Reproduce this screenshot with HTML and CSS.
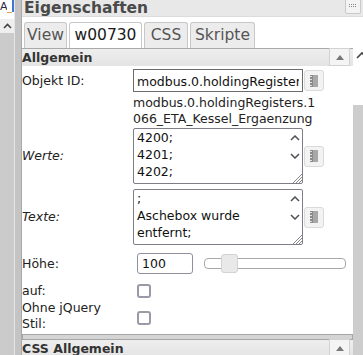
FILE: index.html
```html
<!DOCTYPE html>
<html lang="de">
<head>
<meta charset="utf-8">
<title>Eigenschaften</title>
<link rel="stylesheet" href="styles.css">
</head>
<body>
<div class="app">
  <aside class="side">
    <div class="side-top"><span class="side-a">A</span><span class="side-u">_</span><span class="side-mark"></span></div>
    <div class="side-arrow">
      <svg width="9" height="6" viewBox="0 0 9 6"><polyline points="1,5 4.5,1.5 8,5" fill="none" stroke="#444" stroke-width="1.6"/></svg>
    </div>
    <div class="side-thumb"></div>
  </aside>
  <div class="splitter"></div>
  <main class="panel">
    <header class="panel-head">
      <span class="panel-title">Eigenschaften</span>
      <span class="grip-btn">
        <svg width="8" height="4" viewBox="0 0 8 4"><g fill="#888"><rect x="0" y="0" width="1" height="1"/><rect x="2" y="0" width="1" height="1"/><rect x="4" y="0" width="1" height="1"/><rect x="6" y="0" width="1" height="1"/><rect x="0" y="2" width="1" height="1"/><rect x="2" y="2" width="1" height="1"/><rect x="4" y="2" width="1" height="1"/><rect x="6" y="2" width="1" height="1"/></g></svg>
      </span>
    </header>
    <nav class="tabs">
      <span class="tab tab-view">View</span>
      <span class="tab tab-active tab-w">w00730</span>
      <span class="tab tab-css">CSS</span>
      <span class="tab tab-skr">Skripte</span>
    </nav>
    <div class="body">
      <div class="content">
        <div class="sec-head">
          <span class="sec-title">Allgemein</span>
          <span class="sec-btn"><svg width="8" height="5" viewBox="0 0 8 5"><polygon points="0,5 4,0 8,5" fill="#777"/></svg></span>
        </div>

        <div class="row row-id">
          <label class="lbl">Objekt ID:</label>
          <div class="ctrl">
            <input class="txt txt-id" type="text" value="modbus.0.holdingRegisters.1066_ETA_Kessel_Ergaenzung">
            <span class="pick"><svg width="8" height="12" viewBox="0 0 8 12"><rect x="0" y="0" width="8" height="12" fill="#8a8a8a"/><rect x="3" y="0" width="5" height="12" fill="#a8a8a8"/><g fill="#e2e2e2"><rect x="0" y="1" width="2" height="1"/><rect x="0" y="4" width="2" height="1"/><rect x="0" y="7" width="2" height="1"/><rect x="0" y="10" width="2" height="1"/></g></svg></span>
          </div>
        </div>

        <div class="row row-path">
          <span class="lbl"></span>
          <div class="path">modbus.0.holdingRegisters.1<br>066_ETA_Kessel_Ergaenzung</div>
        </div>

        <div class="row row-ta row-werte">
          <label class="lbl lbl-it">Werte:</label>
          <div class="ctrl">
            <div class="ta">
              <div class="ta-text">4200;
4201;
4202;</div>
              <div class="ta-bar">
                <span class="ta-up"><svg width="10" height="6" viewBox="0 0 10 6"><polyline points="1,5 5,1 9,5" fill="none" stroke="#505050" stroke-width="1.5"/></svg></span>
                <span class="ta-down"><svg width="10" height="6" viewBox="0 0 10 6"><polyline points="1,1 5,5 9,1" fill="none" stroke="#505050" stroke-width="1.5"/></svg></span>
                <span class="ta-grip"><svg width="10" height="10" viewBox="0 0 10 10"><g stroke="#888" stroke-width="1"><line x1="10" y1="1" x2="1" y2="10"/><line x1="10" y1="4" x2="4" y2="10"/><line x1="10" y1="7" x2="7" y2="10"/></g></svg></span>
              </div>
            </div>
            <span class="pick"><svg width="8" height="12" viewBox="0 0 8 12"><rect x="0" y="0" width="8" height="12" fill="#8a8a8a"/><rect x="3" y="0" width="5" height="12" fill="#a8a8a8"/><g fill="#e2e2e2"><rect x="0" y="1" width="2" height="1"/><rect x="0" y="4" width="2" height="1"/><rect x="0" y="7" width="2" height="1"/><rect x="0" y="10" width="2" height="1"/></g></svg></span>
          </div>
        </div>

        <div class="row row-ta row-texte">
          <label class="lbl lbl-it">Texte:</label>
          <div class="ctrl">
            <div class="ta">
              <div class="ta-text">;
Aschebox wurde
entfernt;</div>
              <div class="ta-bar">
                <span class="ta-up"><svg width="10" height="6" viewBox="0 0 10 6"><polyline points="1,5 5,1 9,5" fill="none" stroke="#505050" stroke-width="1.5"/></svg></span>
                <span class="ta-down"><svg width="10" height="6" viewBox="0 0 10 6"><polyline points="1,1 5,5 9,1" fill="none" stroke="#505050" stroke-width="1.5"/></svg></span>
                <span class="ta-grip"><svg width="10" height="10" viewBox="0 0 10 10"><g stroke="#888" stroke-width="1"><line x1="10" y1="1" x2="1" y2="10"/><line x1="10" y1="4" x2="4" y2="10"/><line x1="10" y1="7" x2="7" y2="10"/></g></svg></span>
              </div>
            </div>
            <span class="pick"><svg width="8" height="12" viewBox="0 0 8 12"><rect x="0" y="0" width="8" height="12" fill="#8a8a8a"/><rect x="3" y="0" width="5" height="12" fill="#a8a8a8"/><g fill="#e2e2e2"><rect x="0" y="1" width="2" height="1"/><rect x="0" y="4" width="2" height="1"/><rect x="0" y="7" width="2" height="1"/><rect x="0" y="10" width="2" height="1"/></g></svg></span>
          </div>
        </div>

        <div class="row row-hoehe">
          <label class="lbl">Höhe:</label>
          <div class="ctrl">
            <input class="txt txt-num" type="text" value="100">
            <div class="slider"><span class="handle"></span></div>
          </div>
        </div>

        <div class="row row-auf">
          <label class="lbl">auf:</label>
          <div class="ctrl"><input class="cb" type="checkbox"></div>
        </div>

        <div class="row row-stil">
          <label class="lbl">Ohne jQuery Stil:</label>
          <div class="ctrl"><input class="cb" type="checkbox"></div>
        </div>

        <div class="hbar"></div>

        <div class="sec-head sec-css">
          <span class="sec-title">CSS Allgemein</span>
          <span class="sec-btn"><svg width="8" height="5" viewBox="0 0 8 5"><polygon points="0,5 4,0 8,5" fill="#777"/></svg></span>
        </div>
      </div>
      <div class="vscroll">
        <div class="vs-arrow"><svg width="10" height="10" viewBox="0 0 10 10"><polyline points="4,8 9,3 14,8" fill="none" stroke="#444" stroke-width="1.6"/></svg></div>
        <div class="vs-gap"></div>
        <div class="vs-thumb"></div>
      </div>
    </div>
  </main>
</div>
</body>
</html>
```
FILE: styles.css
```css
html, body {
  margin: 0;
  padding: 0;
}
body {
  width: 363px;
  height: 355px;
  overflow: hidden;
  background: #fff;
  color: #222;
  font-family: "DejaVu Sans", Verdana, sans-serif;
  font-size: 12.5px;
}
.app {
  display: flex;
  height: 355px;
}

/* left neighbour panel */
.side {
  width: 14px;
  flex-shrink: 0;
  display: flex;
  flex-direction: column;
  background: #cbcbcb;
}
.side-top {
  height: 19px;
  background: #fff;
  display: flex;
  align-items: flex-start;
  font-size: 11px;
  line-height: 13px;
}
.side-a { color: #1f2a44; width: 7px; overflow: hidden; }
.side-u { color: #e0882a; width: 5px; overflow: hidden; }
.side-mark {
  width: 2px;
  height: 12px;
  background: #3d78d8;
}
.side-arrow {
  height: 14px;
  background: #efefef;
  display: flex;
  align-items: center;
  justify-content: center;
}
.side-thumb {
  flex: 1;
  background: #cbcbcb;
}
.splitter {
  width: 7px;
  flex-shrink: 0;
  box-sizing: border-box;
  border-left: 1px solid #e6e6e6;
  background: #c4c4c4;
}

/* main panel */
.panel {
  flex: 1;
  min-width: 0;
  display: flex;
  flex-direction: column;
  border-left: 1px solid #a9a9a9;
}
.panel-head {
  height: 17px;
  box-sizing: border-box;
  flex-shrink: 0;
  display: flex;
  align-items: flex-start;
  padding-left: 2px;
  background: #e8e8e8;
  border-bottom: 1px solid #dcdcdc;
}
.panel-title {
  font-weight: bold;
  font-size: 15.5px;
  line-height: 16px;
  color: #4a4a4a;
}
.grip-btn {
  margin-left: auto;
  margin-right: 2px;
  margin-top: -2px;
  width: 16px;
  height: 16px;
  box-sizing: border-box;
  border: 1px solid #c9c9c9;
  border-radius: 2px;
  background: #f3f3f3;
  display: flex;
  align-items: center;
  justify-content: center;
}

.tabs {
  height: 31px;
  flex-shrink: 0;
  display: flex;
  align-items: flex-end;
  gap: 2px;
  padding-left: 2px;
  background: #fff;
}
.tab {
  box-sizing: border-box;
  height: 26px;
  padding-top: 3px;
  border: 1px solid #c8c8c8;
  border-bottom: 0;
  border-radius: 3px 3px 0 0;
  background: #ececec;
  color: #555;
  font-size: 15.5px;
  line-height: 18px;
  text-align: center;
  white-space: nowrap;
}
.tab-active { background: #fff; color: #1a1a1a; }
.tab-view { width: 43px; }
.tab-w { width: 73px; }
.tab-css { width: 44px; }
.tab-skr { width: 65px; }

.body {
  flex: 1;
  min-height: 0;
  display: flex;
  overflow: hidden;
}
.content {
  flex: 1;
  min-width: 0;
  display: flex;
  flex-direction: column;
  border-top: 1px solid #a9a9a9;
}
.vscroll {
  width: 10px;
  flex-shrink: 0;
  display: flex;
  flex-direction: column;
  background: #fff;
}
.vs-arrow {
  height: 14px;
  display: flex;
  align-items: center;
  overflow: hidden;
}
.vs-gap { height: 43px; }
.vs-thumb {
  flex: 1;
  background: #cdcdcd;
}

/* section headers */
.sec-head {
  height: 17px;
  flex-shrink: 0;
  display: flex;
  align-items: flex-start;
  background: linear-gradient(#eeeeee, #e4e4e4);
}
.sec-title {
  font-weight: bold;
  line-height: 17px;
  color: #333;
}
.sec-btn {
  margin-left: auto;
  margin-right: 3px;
  margin-top: -1px;
  width: 21px;
  height: 18px;
  box-sizing: border-box;
  border: 1px solid #d2d2d2;
  background: #f4f4f4;
  display: flex;
  align-items: center;
  justify-content: center;
}
.sec-css { margin-top: 0; }

/* rows */
.row {
  display: grid;
  grid-template-columns: 111px 1fr;
  align-items: center;
  flex-shrink: 0;
}
.lbl {
  padding-right: 12px;
  line-height: 16px;
  color: #222;
}
.lbl-it { font-style: italic; }
.ctrl {
  display: flex;
  align-items: center;
}

.row-id { margin-top: 3px; height: 23px; }
.txt {
  box-sizing: border-box;
  margin: 0;
  font-family: inherit;
  font-size: 12.5px;
  color: #111;
  background: #fff;
  outline: none;
}
.txt-id {
  width: 170px;
  height: 23px;
  padding: 1px 3px 0;
  border: 1px solid #6b6b6b;
  border-radius: 0;
}
.pick {
  margin-left: 1px;
  width: 20px;
  height: 21px;
  box-sizing: border-box;
  border: 1px solid #dadada;
  border-radius: 3px;
  background: #f3f3f3;
  display: flex;
  align-items: center;
  justify-content: center;
}

.row-path { margin-top: 3px; }
.path {
  line-height: 16px;
  color: #222;
  white-space: nowrap;
}

.row-werte { margin-top: 1px; }
.row-texte { margin-top: 5px; }
.ta {
  width: 170px;
  height: 56px;
  box-sizing: border-box;
  border: 1px solid #7e7e88;
  border-radius: 2px;
  display: flex;
  overflow: hidden;
}
.ta-text {
  flex: 1;
  min-width: 0;
  padding: 0 3px;
  line-height: 17px;
  white-space: pre;
  overflow: hidden;
  color: #111;
}
.ta-bar {
  width: 14px;
  display: flex;
  flex-direction: column;
}
.ta-up, .ta-down {
  height: 17px;
  display: flex;
  align-items: center;
  justify-content: center;
}
.ta-down { margin-top: 1px; }
.ta-grip {
  margin-top: auto;
  align-self: flex-end;
  width: 10px;
  height: 10px;
  display: flex;
}

.row-hoehe { margin-top: 8px; height: 21px; }
.txt-num {
  margin-left: 4px;
  width: 56px;
  height: 21px;
  padding: 0 4px;
  border: 1px solid #8f8f9d;
  border-radius: 3px;
}
.slider {
  position: relative;
  margin-left: 11px;
  width: 142px;
  height: 11px;
  box-sizing: border-box;
  border: 1px solid #a8a8a8;
  border-radius: 4px;
  background: #fff;
}
.handle {
  position: absolute;
  left: 16px;
  top: -5px;
  width: 17px;
  height: 19px;
  box-sizing: border-box;
  border: 1px solid #d3d3d3;
  border-radius: 3px;
  background: #e9e9e9;
}

.row-auf { margin-top: 9px; height: 14px; }
.row-stil { margin-top: 3px; }
.cb {
  -webkit-appearance: none;
  appearance: none;
  margin: 0 0 0 4px;
  width: 14px;
  height: 14px;
  box-sizing: border-box;
  border: 2px solid #9a9aa8;
  border-radius: 3px;
  background: #fff;
}
.row-stil .cb { margin-top: 3px; }

.hbar {
  margin-top: 2px;
  height: 6px;
  flex-shrink: 0;
  box-sizing: border-box;
  border: 1px solid #a6a6a6;
  background: #d4d4d4;
}
```
